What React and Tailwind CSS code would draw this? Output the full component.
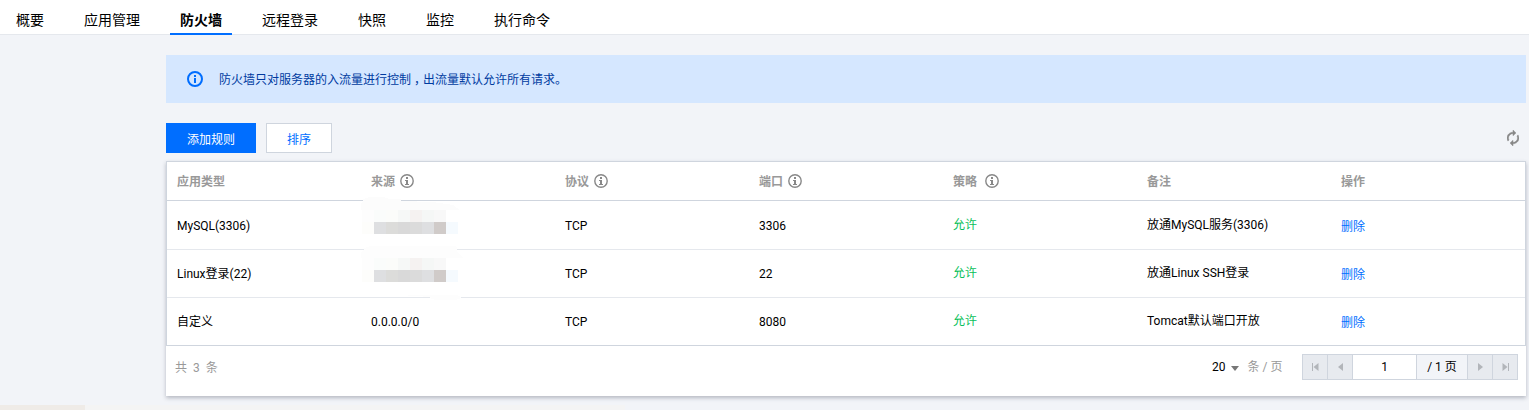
import React from "react";

const tabs = ["概要", "应用管理", "防火墙", "远程登录", "快照", "监控", "执行命令"];

const columns = [
  { label: "应用类型" },
  { label: "来源", info: "ml-[5px]" },
  { label: "协议", info: "ml-[5px]" },
  { label: "端口", info: "ml-[5px]" },
  { label: "策略", info: "ml-[8px]" },
  { label: "备注" },
  { label: "操作" },
];

const rows = [
  { type: "MySQL(3306)", source: null, port: "3306", note: "放通MySQL服务(3306)", row: "h-[49px] border-b border-[#e5e8ed]" },
  { type: "Linux登录(22)", source: null, port: "22", note: "放通Linux SSH登录", row: "h-[48px] border-b border-[#e5e8ed] pb-px" },
  { type: "自定义", source: "0.0.0.0/0", port: "8080", note: "Tomcat默认端口开放", row: "-mb-px h-[48px] pb-[2px]" },
];

function InfoIcon({ className }) {
  return (
    <svg className={className} width="14" height="14" viewBox="0 0 14 14" fill="none">
      <circle cx="7" cy="7" r="6.2" stroke="currentColor" strokeWidth="1.4" />
      <path d="M6 3h2v2H6zM5 6h3v4h1v1H5v-1h1V7H5z" fill="currentColor" />
    </svg>
  );
}

function AlertIcon() {
  return (
    <svg className="text-[#006eff]" width="16" height="16" viewBox="0 0 16 16" fill="none">
      <circle cx="8" cy="8" r="7" stroke="currentColor" strokeWidth="2" />
      <path d="M7 4h2v2H7zM7 7h2v5H7z" fill="currentColor" />
    </svg>
  );
}

function RefreshIcon() {
  return (
    <svg width="12" height="16" viewBox="4 1 16 22" preserveAspectRatio="none" className="text-[#888]">
      <path
        d="M12 6v3l4-4-4-4v3c-4.42 0-8 3.58-8 8 0 1.57.46 3.03 1.24 4.26L6.7 14.8c-.45-.83-.7-1.79-.7-2.8 0-3.31 2.69-6 6-6zm6.76 1.74L17.3 9.2c.44.84.7 1.79.7 2.8 0 3.31-2.69 6-6 6v-3l-4 4 4 4v-3c4.42 0 8-3.58 8-8 0-1.57-.46-3.03-1.24-4.26z"
        fill="currentColor"
        stroke="currentColor"
        strokeWidth="0.6"
      />
    </svg>
  );
}

function MaskedSource({ first }) {
  return (
    <svg
      className={first ? "absolute left-0 -top-[9px]" : "absolute left-0 -top-[10px]"}
      width="110"
      height="64"
      viewBox="0 0 110 64"
      shapeRendering="crispEdges"
    >
      {first ? (
        <path d="M-7 18L2 10V7L8 5H22L28 7H40V9L72 10L92 13L99 18Z" fill="#fcfcfc" />
      ) : (
        <>
          <path d="M-6 18L3 10V8L10 6H94L96 8V11L102 18Z" fill="#fdfdfd" />
          <path d="M40 55H96L100 57V58L94 60H74L69 58V57Z" fill="#fdfdfd" />
        </>
      )}
      <rect x="1" y="18" width="12" height="12" fill="#fdfdfd" />
      <rect x="13" y="18" width="12" height="12" fill="#fafcfb" />
      <rect x="25" y="18" width="12" height="12" fill="#fbfcfa" />
      <rect x="37" y="18" width="12" height="12" fill="#f6f8f7" />
      <rect x="49" y="18" width="12" height="12" fill="#f5f2f1" />
      <rect x="61" y="18" width="12" height="12" fill="#f5f7f6" />
      <rect x="73" y="18" width="12" height="12" fill="#f8f8f8" />
      <rect x="1" y="30" width="12" height="12" fill="#fdfdfb" />
      <rect x="13" y="30" width="12" height="12" fill="#dedfe1" />
      <rect x="25" y="30" width="12" height="12" fill="#dcdcda" />
      <rect x="37" y="30" width="12" height="12" fill="#d9d9d9" />
      <rect x="49" y="30" width="12" height="12" fill="#dbdbdb" />
      <rect x="61" y="30" width="12" height="12" fill="#dedfe1" />
      <rect x="73" y="30" width="12" height="12" fill="#d0cbc9" />
      <rect x="85" y="30" width="12" height="12" fill="#f5fafe" />
    </svg>
  );
}

export default function App() {
  return (
    <div className="flex h-[410px] w-[1529px] flex-col overflow-hidden bg-[#f2f4f8] font-['Roboto','Noto_Sans_CJK_SC',sans-serif] text-xs text-black">
      <nav className="flex h-[35px] shrink-0 gap-5 border-b border-[#e5e8ed] bg-white pl-1.5 text-sm">
        {tabs.map((tab) => (
          <a
            key={tab}
            className={
              tab === "防火墙"
                ? "h-[35px] border-b-2 border-[#006eff] px-2.5 font-bold leading-[41px]"
                : "h-[35px] px-2.5 leading-[41px]"
            }
          >
            {tab}
          </a>
        ))}
      </nav>

      <main className="ml-[166px] flex w-[1360px] flex-col pt-5">
        <div className="flex h-12 items-center gap-4 bg-[#d5e7ff] pl-[21px] text-[#003b9f]">
          <AlertIcon />
          <p className="whitespace-nowrap pt-0.5">
            防火墙只对服务器的入流量进行控制<span className="inline-block w-3 indent-[3px]">，</span>出流量默认允许所有请求。
          </p>
        </div>

        <div className="mt-5 flex h-[30px] items-center">
          <button className="h-[30px] w-[90px] bg-[#006eff] pt-1 text-white">添加规则</button>
          <button className="ml-2.5 h-[30px] w-[66px] border border-[#cfd5de] bg-white pt-1 text-[#006eff]">排序</button>
          <button className="ml-auto mr-[7px]">
            <RefreshIcon />
          </button>
        </div>

        <section className="mt-2 h-[235px] bg-white shadow-[0_2px_4px_rgba(54,58,80,0.32)]">
          <div className="border border-[#cfd5de]">
            <div className="flex h-[39px] border-b border-[#cfd5de] font-bold text-[#999]">
              {columns.map((c) => (
                <div key={c.label} className="flex w-[194px] items-center pl-2.5">
                  <span className="pt-px">{c.label}</span>
                  {c.info && <InfoIcon className={`${c.info} text-[#888]`} />}
                </div>
              ))}
            </div>
            {rows.map((r, i) => (
              <div key={r.port} className={`${r.row} flex items-center`}>
                <div className="w-[194px] pl-2.5 pt-0.5">{r.type}</div>
                <div className="relative flex h-full w-[194px] items-center pl-2.5 pt-0.5">
                  {r.source ? <span>{r.source}</span> : <MaskedSource first={i === 0} />}
                </div>
                <div className="w-[194px] pl-2.5 pt-0.5">TCP</div>
                <div className="w-[194px] pl-2.5 pt-0.5">{r.port}</div>
                <div className="w-[194px] pl-2.5 text-[#0abf5b]">允许</div>
                <div className="w-[194px] pl-2.5">{r.note}</div>
                <div className="pl-2.5 pt-1 text-[#006eff]">删除</div>
              </div>
            ))}
          </div>
          <div className="flex h-[42px] items-center pl-[9px] pr-2">
            <span className="pt-0.5 text-[#999] [word-spacing:3px]">共 3 条</span>
            <span className="ml-auto">20</span>
            <svg className="ml-[5px] mt-[3px] text-[#777]" width="8" height="5" viewBox="0 0 8 5" fill="currentColor">
              <path d="M0 0h8L4 5z" />
            </svg>
            <span className="ml-[9px] text-[#999]">条 / 页</span>
            <div className="ml-[19.5px] flex h-[26px] border border-[#cfd5de] text-[#b2b5ba]">
              <button className="flex w-[25px] items-center justify-center border-r border-[#cfd5de] bg-[#e7eaef]">
                <svg width="7" height="8" viewBox="0 0 7 8" fill="currentColor"><path d="M0 0h1v8H0zM6.5 0v8L1.5 4z" /></svg>
              </button>
              <button className="flex w-[25px] items-center justify-center border-r border-[#cfd5de] bg-[#e7eaef]">
                <svg width="5" height="8" viewBox="0 0 5 8" fill="currentColor"><path d="M5 0v8L0 4z" /></svg>
              </button>
              <span className="w-16 border-r border-[#cfd5de] bg-white text-center leading-6 text-black">1</span>
              <span className="w-[51px] border-r border-[#cfd5de] bg-[#f2f4f8] text-center leading-6 text-black">/ 1 页</span>
              <button className="flex w-[25px] items-center justify-center border-r border-[#cfd5de] bg-[#e7eaef]">
                <svg width="5" height="8" viewBox="0 0 5 8" fill="currentColor"><path d="M0 0v8l5-4z" /></svg>
              </button>
              <button className="flex w-6 items-center justify-center bg-[#e7eaef]">
                <svg width="7" height="8" viewBox="0 0 7 8" fill="currentColor"><path d="M6 0h1v8H6zM.5 0v8l5-4z" /></svg>
              </button>
            </div>
          </div>
        </section>
      </main>
      <footer className="mt-auto flex h-[5px]">
        <div className="w-[85px] bg-[#efebe7]" />
        <div className="w-[540px] bg-[#f4f4f4]" />
      </footer>
    </div>
  );
}
